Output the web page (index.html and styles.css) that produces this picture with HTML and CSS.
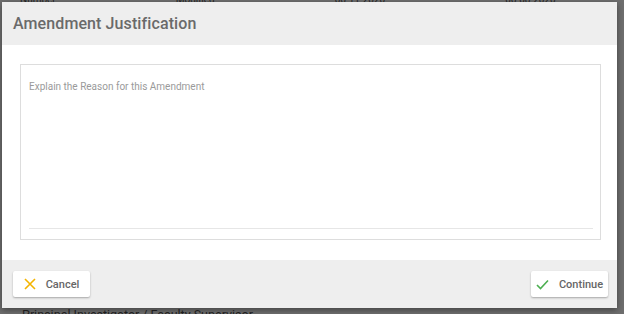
FILE: index.html
```html
<!DOCTYPE html>
<html lang="en">
<head>
  <meta charset="UTF-8">
  <meta name="viewport" content="width=device-width, initial-scale=1.0">
  <title>Amendment Justification</title>
  <link rel="stylesheet" href="styles.css">
</head>
<body>
  <div class="backdrop-top">
    <span>Number</span><span>Modified</span><span>06-11-2020</span><span>06-08-2020</span>
  </div>
  <div class="dialog">
    <div class="dialog-header">
      <h2>Amendment Justification</h2>
    </div>
    <div class="dialog-body">
      <div class="field">
        <textarea placeholder="Explain the Reason for this Amendment"></textarea>
        <div class="field-line"></div>
      </div>
    </div>
    <div class="dialog-footer">
      <button class="btn">
        <svg width="12" height="12" viewBox="0 0 12 12"><path d="M1 1L11 11M11 1L1 11" stroke="#f4b400" stroke-width="1.6" fill="none"/></svg>
        Cancel
      </button>
      <button class="btn">
        <svg width="13" height="11" viewBox="0 0 13 11"><path d="M1 6L4.5 9.5L12 1.5" stroke="#4caf50" stroke-width="1.6" fill="none"/></svg>
        Continue
      </button>
    </div>
  </div>
  <div class="backdrop-bottom">Principal Investigator / Faculty Supervisor</div>
</body>
</html>
```

FILE: styles.css
```css
* {
  box-sizing: border-box;
}
body {
  margin: 0;
  background-color: #6e6e6e;
  font-family: Roboto, 'Liberation Sans', sans-serif;
  overflow: hidden;
  height: 314px;
}
.backdrop-top {
  height: 2px;
  overflow: hidden;
  display: flex;
  gap: 120px;
  padding-left: 20px;
  font-size: 10px;
  line-height: 0;
  color: #222;
}
.dialog {
  margin-left: 2px;
  width: 615px;
  background-color: #fff;
  box-shadow: 0 2px 6px rgba(0, 0, 0, 0.4);
}
.dialog-header {
  background-color: #eeeeee;
  height: 43px;
  padding: 12px 0 0 11px;
}
.dialog-header h2 {
  margin: 0;
  font-size: 16px;
  font-weight: 500;
  color: #6a6a6a;
  letter-spacing: 0.1px;
}
.dialog-body {
  padding: 19px 16px 20px 18px;
  height: 215px;
}
.field {
  border: 1px solid #ddd;
  height: 176px;
  padding: 0 7px 10px 8px;
  display: flex;
  flex-direction: column;
}
textarea {
  flex: 1;
  border: none;
  resize: none;
  outline: none;
  padding: 16px 0 0 0;
  font-family: Roboto, 'Liberation Sans', sans-serif;
  font-size: 10px;
  color: #555;
}
textarea::placeholder {
  color: #9a9a9a;
}
.field-line {
  height: 1px;
  background-color: #e6e6e6;
}
.dialog-footer {
  background-color: #eeeeee;
  height: 48px;
  padding: 11px 9px 0 11px;
  display: flex;
  justify-content: space-between;
  align-items: flex-start;
}
.btn {
  width: 77px;
  height: 26px;
  display: flex;
  align-items: center;
  justify-content: center;
  gap: 10px;
  padding: 0;
  background-color: #fff;
  border: none;
  border-radius: 2px;
  box-shadow: 0 1px 2px rgba(0, 0, 0, 0.3);
  font-family: Roboto, 'Liberation Sans', sans-serif;
  font-size: 11px;
  font-weight: 500;
  color: #666;
  cursor: pointer;
}
.btn svg {
  flex-shrink: 0;
}
.backdrop-bottom {
  padding: 0 0 0 22px;
  font-size: 12.5px;
  line-height: 14px;
  color: #1e1e1e;
}
```
